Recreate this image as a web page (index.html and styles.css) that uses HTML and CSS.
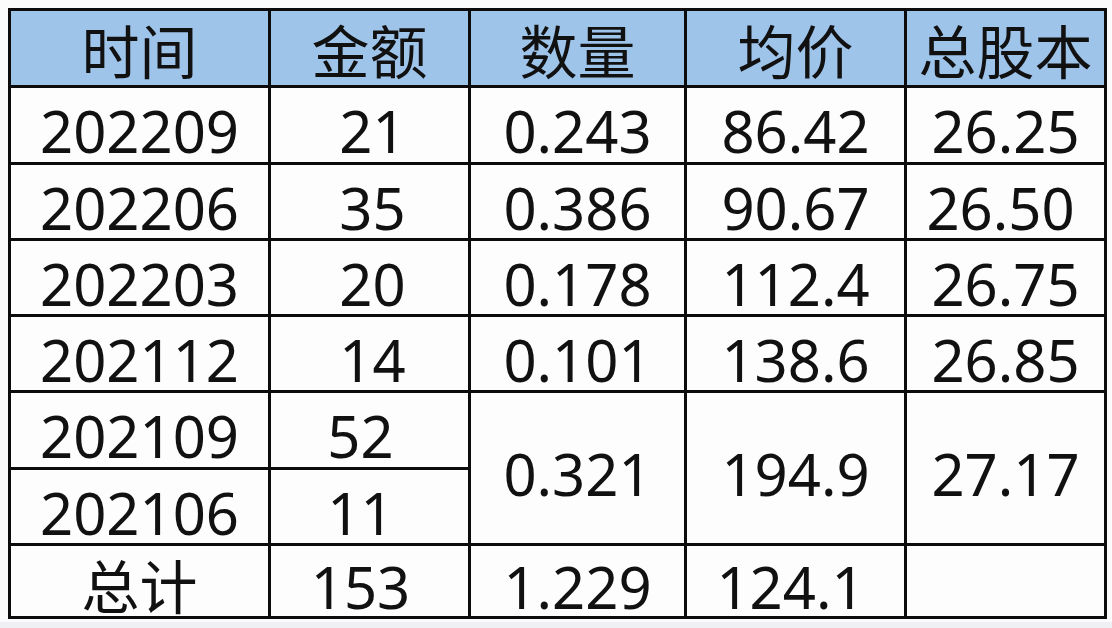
FILE: index.html
```html
<!DOCTYPE html>
<html lang="zh">
<head>
<meta charset="utf-8">
<title>表格</title>
<link rel="stylesheet" href="styles.css">
</head>
<body>
<div class="sheet">
  <div class="grid">
    <div class="cell head">时间</div>
    <div class="cell head">金额</div>
    <div class="cell head">数量</div>
    <div class="cell head">均价</div>
    <div class="cell head">总股本</div>

    <div class="cell">202209</div>
    <div class="cell nudge-r">21</div>
    <div class="cell">0.243</div>
    <div class="cell">86.42</div>
    <div class="cell">26.25</div>

    <div class="cell">202206</div>
    <div class="cell nudge-r">35</div>
    <div class="cell">0.386</div>
    <div class="cell">90.67</div>
    <div class="cell nudge-l">26.50</div>

    <div class="cell">202203</div>
    <div class="cell nudge-r">20</div>
    <div class="cell">0.178</div>
    <div class="cell">112.4</div>
    <div class="cell">26.75</div>

    <div class="cell">202112</div>
    <div class="cell nudge-r">14</div>
    <div class="cell">0.101</div>
    <div class="cell">138.6</div>
    <div class="cell">26.85</div>

    <div class="cell">202109</div>
    <div class="cell nudge-ll">52</div>
    <div class="cell span2">0.321</div>
    <div class="cell span2">194.9</div>
    <div class="cell span2">27.17</div>

    <div class="cell">202106</div>
    <div class="cell nudge-ll">11</div>

    <div class="cell">总计</div>
    <div class="cell nudge-ll">153</div>
    <div class="cell">1.229</div>
    <div class="cell nudge-l">124.1</div>
    <div class="cell"></div>
  </div>
</div>
</body>
</html>
```

FILE: styles.css
```css
html, body {
  margin: 0;
  padding: 0;
}
body {
  background: #eef0f3;
  font-family: "Noto Sans", "Noto Sans CJK SC", sans-serif;
  color: #111;
}
.sheet {
  background: #fbfbfc;
  height: 622px;
  padding: 8px 0 0 8px;
  box-sizing: border-box;
}
.grid {
  display: inline-grid;
  grid-template-columns: 257px 197px 213px 217px 197px;
  grid-template-rows: 74px 74px 73px 73px 73px 74px 73px 70px;
  gap: 3px;
  padding: 3px;
  background: #0c0c0c;
}
.cell {
  background: #fdfdfe;
  display: flex;
  align-items: center;
  justify-content: center;
  font-size: 58px;
  line-height: 1;
  padding-top: 12px;
  box-sizing: border-box;
  white-space: nowrap;
}
.head {
  background: #9fc4ea;
  padding-top: 8px;
}
.span2 {
  grid-row: span 2;
}
.nudge-r {
  padding-left: 6px;
}
.nudge-l {
  padding-right: 10px;
}
.nudge-ll {
  padding-right: 18px;
}
```
